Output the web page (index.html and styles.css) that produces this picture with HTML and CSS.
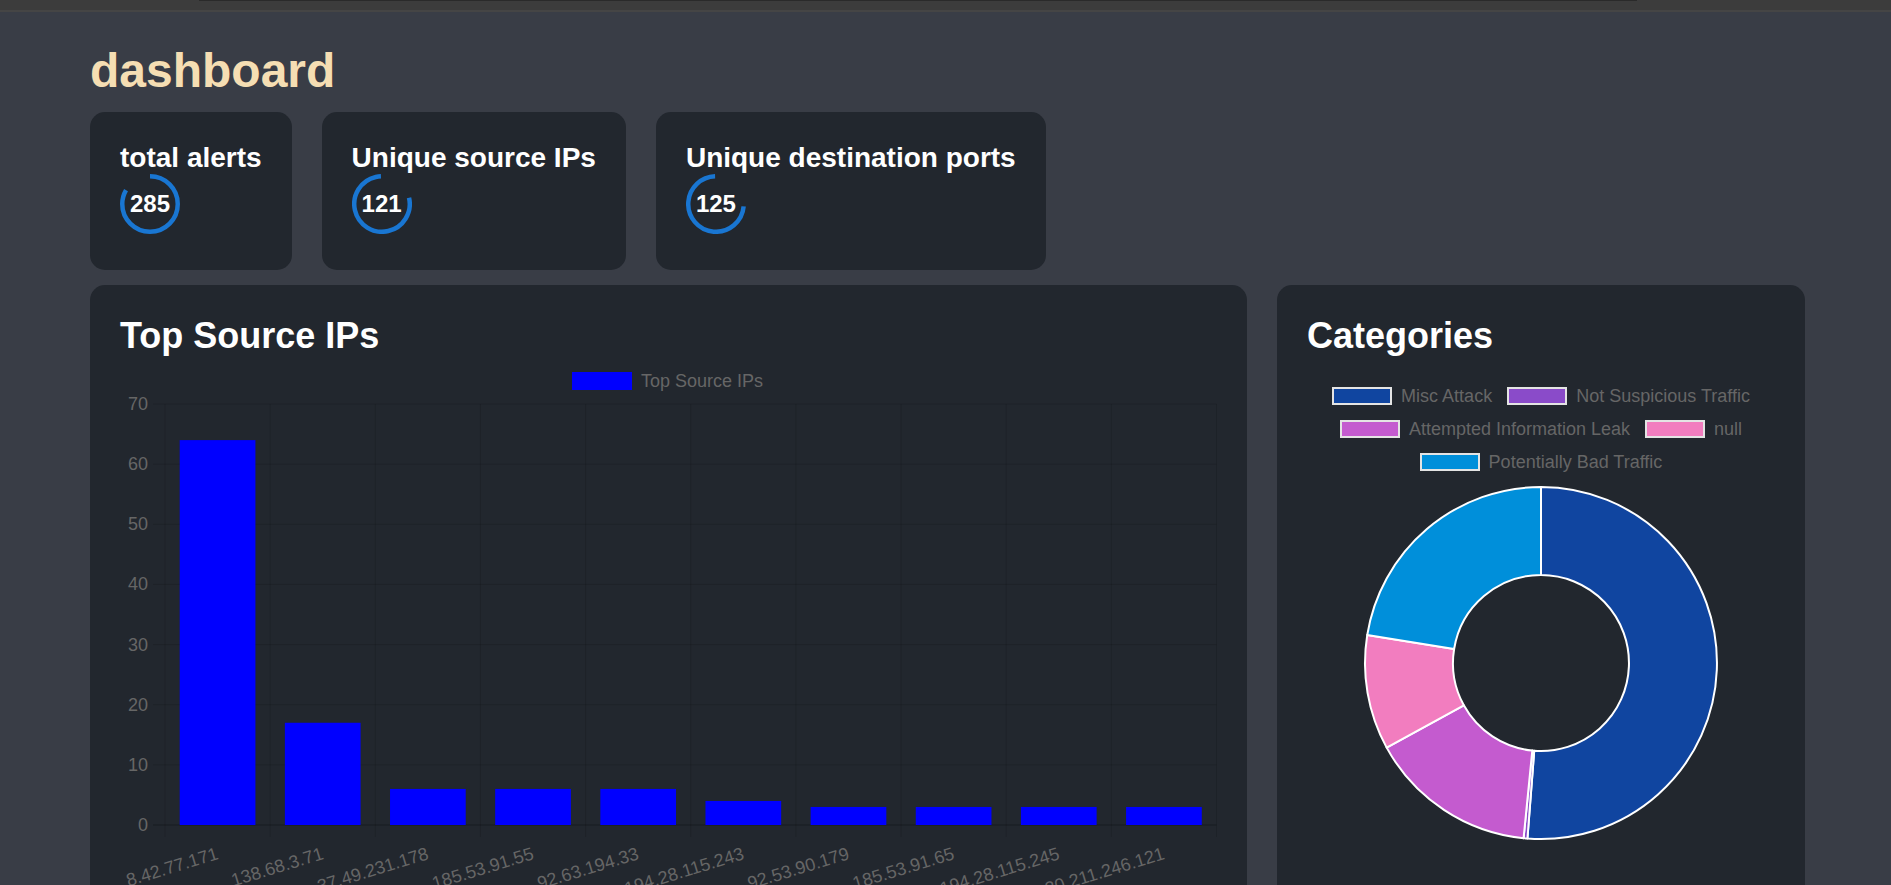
FILE: index.html
```html
<!DOCTYPE html>
<html lang="en">
<head>
<meta charset="utf-8">
<title>dashboard</title>
<link rel="stylesheet" href="styles.css">
</head>
<body>
<div class="topbar"><div class="topbar-thumb"></div></div>
<main class="page">
  <h1 class="page-title">dashboard</h1>
  <section class="stats">
    <div class="stat">
      <div class="stat-title">total alerts</div>
      <div class="ring">
        <svg class="ring-svg" viewBox="0 0 60 60" width="60" height="60"><circle cx="30" cy="30" r="27.75" fill="none" stroke="#1976d2" stroke-width="4.5" stroke-dasharray="145.2 200" transform="rotate(-90 30 30)"/></svg>
        <span class="ring-value">285</span>
      </div>
    </div>
    <div class="stat">
      <div class="stat-title">Unique source IPs</div>
      <div class="ring">
        <svg class="ring-svg" viewBox="0 0 60 60" width="60" height="60"><circle cx="30" cy="30" r="27.75" fill="none" stroke="#1976d2" stroke-width="4.5" stroke-dasharray="135.8 200" transform="rotate(-13 30 30)"/></svg>
        <span class="ring-value">121</span>
      </div>
    </div>
    <div class="stat">
      <div class="stat-title">Unique destination ports</div>
      <div class="ring">
        <svg class="ring-svg" viewBox="0 0 60 60" width="60" height="60"><circle cx="30" cy="30" r="27.75" fill="none" stroke="#1976d2" stroke-width="4.5" stroke-dasharray="127.2 200" transform="rotate(5 30 30)"/></svg>
        <span class="ring-value">125</span>
      </div>
    </div>
  </section>

  <section class="panels">
    <div class="panel">
      <h2 class="panel-title">Top Source IPs</h2>
      <svg class="bar-chart" width="1097" height="540" viewBox="0 0 1097 540">
        <g transform="translate(0,-1)">
          <rect x="452" y="17" width="60" height="18" fill="#0000ff"/>
          <text class="chart-text legend-label" x="521" y="26">Top Source IPs</text>

          <g class="grid">
            <line x1="33" y1="409.86" x2="1096.5" y2="409.86"/>
            <line x1="33" y1="349.72" x2="1096.5" y2="349.72"/>
            <line x1="33" y1="289.58" x2="1096.5" y2="289.58"/>
            <line x1="33" y1="229.44" x2="1096.5" y2="229.44"/>
            <line x1="33" y1="169.3" x2="1096.5" y2="169.3"/>
            <line x1="33" y1="109.16" x2="1096.5" y2="109.16"/>
            <line x1="33" y1="49.02" x2="1096.5" y2="49.02"/>
            <line x1="45" y1="49" x2="45" y2="482"/>
            <line x1="150.15" y1="49" x2="150.15" y2="482"/>
            <line x1="255.3" y1="49" x2="255.3" y2="482"/>
            <line x1="360.45" y1="49" x2="360.45" y2="482"/>
            <line x1="465.6" y1="49" x2="465.6" y2="482"/>
            <line x1="570.75" y1="49" x2="570.75" y2="482"/>
            <line x1="675.9" y1="49" x2="675.9" y2="482"/>
            <line x1="781.05" y1="49" x2="781.05" y2="482"/>
            <line x1="886.2" y1="49" x2="886.2" y2="482"/>
            <line x1="991.35" y1="49" x2="991.35" y2="482"/>
            <line x1="1096.5" y1="49" x2="1096.5" y2="482"/>
          </g>
          <line class="zero-line" x1="33" y1="470" x2="1096.5" y2="470"/>

          <g class="chart-text y-labels">
            <text x="28" y="470">0</text>
            <text x="28" y="409.86">10</text>
            <text x="28" y="349.72">20</text>
            <text x="28" y="289.58">30</text>
            <text x="28" y="229.44">40</text>
            <text x="28" y="169.3">50</text>
            <text x="28" y="109.16">60</text>
            <text x="28" y="49.02">70</text>
          </g>

          <g fill="#0000ff">
            <rect x="59.72" y="85.1" width="75.7" height="384.9"/>
            <rect x="164.87" y="367.76" width="75.7" height="102.24"/>
            <rect x="270.02" y="433.92" width="75.7" height="36.08"/>
            <rect x="375.17" y="433.92" width="75.7" height="36.08"/>
            <rect x="480.32" y="433.92" width="75.7" height="36.08"/>
            <rect x="585.47" y="445.94" width="75.7" height="24.06"/>
            <rect x="690.62" y="451.96" width="75.7" height="18.04"/>
            <rect x="795.77" y="451.96" width="75.7" height="18.04"/>
            <rect x="900.92" y="451.96" width="75.7" height="18.04"/>
            <rect x="1006.07" y="451.96" width="75.7" height="18.04"/>
          </g>

          <g class="chart-text x-labels">
            <text x="97.58" y="498" transform="rotate(-17 97.58 498)">8.42.77.171</text>
            <text x="202.73" y="498" transform="rotate(-17 202.73 498)">138.68.3.71</text>
            <text x="307.88" y="498" transform="rotate(-17 307.88 498)">37.49.231.178</text>
            <text x="413.03" y="498" transform="rotate(-17 413.03 498)">185.53.91.55</text>
            <text x="518.18" y="498" transform="rotate(-17 518.18 498)">92.63.194.33</text>
            <text x="623.33" y="498" transform="rotate(-17 623.33 498)">194.28.115.243</text>
            <text x="728.48" y="498" transform="rotate(-17 728.48 498)">92.53.90.179</text>
            <text x="833.63" y="498" transform="rotate(-17 833.63 498)">185.53.91.65</text>
            <text x="938.78" y="498" transform="rotate(-17 938.78 498)">194.28.115.245</text>
            <text x="1043.93" y="498" transform="rotate(-17 1043.93 498)">80.211.246.121</text>
          </g>
        </g>
      </svg>
    </div>

    <div class="panel">
      <h2 class="panel-title">Categories</h2>
      <ul class="legend">
        <li class="legend-item"><span class="swatch swatch-misc"></span>Misc Attack</li>
        <li class="legend-item"><span class="swatch swatch-notsusp"></span>Not Suspicious Traffic</li>
        <li class="legend-item"><span class="swatch swatch-leak"></span>Attempted Information Leak</li>
        <li class="legend-item"><span class="swatch swatch-null"></span>null</li>
        <li class="legend-item"><span class="swatch swatch-bad"></span>Potentially Bad Traffic</li>
      </ul>
      <svg class="donut" width="360" height="360" viewBox="0 0 360 360">
        <g stroke="#ffffff" stroke-width="2" stroke-linejoin="round">
          <path fill="#1045a0" d="M180,4 A176,176 0 1 1 166.44,355.48 L173.22,267.74 A88,88 0 1 0 180,92 Z"/>
          <path fill="#8a4bc9" d="M166.44,355.48 A176,176 0 0 1 162.58,355.14 L171.29,267.57 A88,88 0 0 0 173.22,267.74 Z"/>
          <path fill="#c45bcf" d="M162.58,355.14 A176,176 0 0 1 25.65,264.64 L102.82,222.32 A88,88 0 0 0 171.29,267.57 Z"/>
          <path fill="#f27dbf" d="M25.65,264.64 A176,176 0 0 1 6.24,151.98 L93.12,165.99 A88,88 0 0 0 102.82,222.32 Z"/>
          <path fill="#008fda" d="M6.24,151.98 A176,176 0 0 1 180,4 L180,92 A88,88 0 0 0 93.12,165.99 Z"/>
        </g>
      </svg>
    </div>
  </section>
</main>
</body>
</html>
```

FILE: styles.css
```css
html, body {
  margin: 0;
  padding: 0;
}

body {
  height: 885px;
  overflow: hidden;
  background: #393d46;
  font-family: "Liberation Sans", Arial, sans-serif;
  color: #ffffff;
}

.topbar {
  height: 10px;
  background: #3c3c3c;
  border-bottom: 2px solid #454545;
}

.topbar-thumb {
  margin-left: 199px;
  width: 1438px;
  height: 1px;
  background: #2a2a2a;
}

.page {
  padding: 31px 86px 0 90px;
}

.page-title {
  margin: 0 0 14px;
  font-size: 48px;
  line-height: 55px;
  font-weight: bold;
  color: #f5deb3;
}

.stats {
  display: flex;
  gap: 30px;
  align-items: flex-start;
}

.stat {
  background: #22272e;
  border-radius: 15px;
  padding: 30px 30px 36px;
}

.stat-title {
  font-size: 28px;
  line-height: 32px;
  font-weight: bold;
  white-space: nowrap;
}

.ring {
  display: grid;
  place-items: center;
  width: 60px;
  height: 60px;
}

.ring-svg,
.ring-value {
  grid-area: 1 / 1;
}

.ring-svg {
  display: block;
}

.ring-value {
  font-size: 24px;
  font-weight: bold;
  line-height: 1;
}

.panels {
  margin-top: 15px;
  display: grid;
  grid-template-columns: 1157px 528px;
  gap: 30px;
  align-items: start;
}

.panel {
  background: #22272e;
  border-radius: 15px;
  padding: 30px;
  height: 700px;
}

.panel-title {
  margin: 0;
  font-size: 36px;
  line-height: 41px;
  font-weight: bold;
}

.bar-chart,
.donut {
  display: block;
  overflow: visible;
}

.chart-text {
  font-family: "Liberation Sans", Arial, sans-serif;
  font-size: 18px;
  fill: #666666;
}

.legend-label {
  dominant-baseline: central;
}

.grid line {
  stroke: rgba(0, 0, 0, 0.12);
  stroke-width: 1;
}

.zero-line {
  stroke: rgba(0, 0, 0, 0.3);
  stroke-width: 1;
}

.y-labels text {
  text-anchor: end;
  dominant-baseline: central;
}

.x-labels text {
  text-anchor: end;
  dominant-baseline: central;
}

.legend {
  list-style: none;
  margin: 31px 0 0;
  padding: 0;
  display: flex;
  flex-wrap: wrap;
  justify-content: center;
  column-gap: 15px;
  row-gap: 15px;
}

.legend-item {
  display: flex;
  align-items: center;
  gap: 9px;
  height: 18px;
  font-size: 18px;
  color: #666666;
  white-space: nowrap;
}

.swatch {
  box-sizing: border-box;
  width: 60px;
  height: 18px;
  border: 2px solid #e4e4e4;
}

.swatch-misc { background: #1045a0; }
.swatch-notsusp { background: #8a4bc9; }
.swatch-leak { background: #c45bcf; }
.swatch-null { background: #f27dbf; }
.swatch-bad { background: #008fda; }

.donut {
  margin: 12px auto 0;
}
```
